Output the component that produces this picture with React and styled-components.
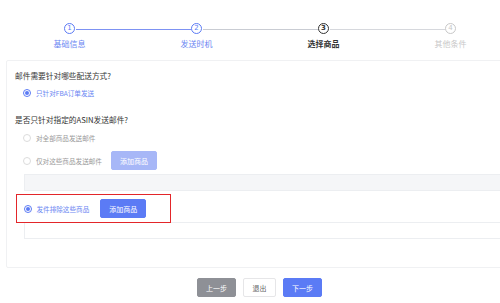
import React from "react";
import styled, { createGlobalStyle, css } from "styled-components";

const Global = createGlobalStyle`
  html, body { margin: 0; padding: 0; background: #fff; overflow: hidden; }
  body { font-family: "Noto Sans CJK SC", "Noto Sans", sans-serif; color: #333; }
  * { box-sizing: border-box; }
`;

const BLUE = "#5b7bf5";

const Page = styled.div`
  width: 500px;
  height: 303px;
  padding-top: 23px;
`;

const Steps = styled.div`
  display: grid;
  grid-template-columns: repeat(4, 127px);
  padding-left: 6px;
`;

const lineColor = { done: "#7d92f3", current: "#c9ccd3", todo: "#d6d8dd" };

const Step = styled.div`
  position: relative;
  display: flex;
  flex-direction: column;
  align-items: center;
  &::before, &::after {
    content: "";
    position: absolute;
    top: 5.5px;
    height: 1px;
    width: calc(50% - 6px);
  }
  &::before {
    left: 0;
    background: ${(p) => p.$left || "transparent"};
  }
  &::after {
    right: 0;
    background: ${(p) => p.$right || "transparent"};
  }
`;

const circleColors = {
  done: BLUE,
  current: "#333",
  todo: "#c8c8c8",
};

const Circle = styled.div`
  width: 11px;
  height: 11px;
  border-radius: 50%;
  border: 1.2px solid ${(p) => circleColors[p.$state]};
  color: ${(p) => circleColors[p.$state]};
  font-size: 7px;
  line-height: 9px;
  text-align: center;
  font-weight: ${(p) => (p.$state === "current" ? 700 : 400)};
  font-family: "DejaVu Sans", sans-serif;
  background: #fff;
`;

const StepLabel = styled.div`
  margin-top: 4px;
  font-size: 8px;
  line-height: 11px;
  color: ${(p) =>
    p.$state === "done" ? "#6a86f2" : p.$state === "current" ? "#333" : "#c8c8c8"};
  font-weight: ${(p) => (p.$state === "current" ? 700 : 400)};
`;

const Card = styled.div`
  margin-top: 11px;
  margin-left: 6px;
  width: 520px;
  height: 208px;
  border: 1px solid #f0f1f3;
  border-radius: 2px;
  padding: 9px 0 0 8px;
`;

const Question = styled.div`
  font-size: 7.7px;
  line-height: 12px;
  color: #333;
  margin-top: ${(p) => p.$mt || 0}px;
  margin-bottom: ${(p) => p.$mb || 0}px;
`;

const OptionRow = styled.div`
  display: flex;
  align-items: center;
  height: ${(p) => p.$h || 12}px;
  padding-left: 8px;
  margin-top: ${(p) => p.$mt || 0}px;
`;

const Radio = styled.span`
  width: 8px;
  height: 8px;
  border-radius: 50%;
  flex: none;
  border: 1px solid ${(p) => (p.$checked ? BLUE : "#dcdcdc")};
  background: #fff;
  display: flex;
  align-items: center;
  justify-content: center;
  ${(p) =>
    p.$checked &&
    css`
      &::after {
        content: "";
        width: 4px;
        height: 4px;
        border-radius: 50%;
        background: ${BLUE};
      }
    `}
`;

const OptionText = styled.span`
  margin-left: 5px;
  font-size: 6.6px;
  line-height: 12px;
  color: ${(p) => (p.$active ? "#6a86f2" : "#999")};
`;

const Button = styled.button`
  font-family: inherit;
  border-radius: 2px;
  font-size: 7px;
  height: ${(p) => p.$h || 19}px;
  width: ${(p) => p.$w}px;
  padding: 0;
  margin-left: ${(p) => p.$ml || 0}px;
  cursor: pointer;
  ${(p) =>
    p.$kind === "primary" &&
    css`
      background: ${BLUE};
      border: 1px solid ${BLUE};
      color: #fff;
    `}
  ${(p) =>
    p.$kind === "disabled" &&
    css`
      background: #a7b7f7;
      border: 1px solid #a7b7f7;
      color: #fff;
    `}
  ${(p) =>
    p.$kind === "grey" &&
    css`
      background: #8e9096;
      border: 1px solid #8e9096;
      color: #fff;
    `}
  ${(p) =>
    p.$kind === "plain" &&
    css`
      background: #fff;
      border: 1px solid #e6e6e8;
      color: #666;
    `}
`;

const TableBox = styled.div`
  margin-left: 9px;
  height: ${(p) => p.$h}px;
  margin-top: ${(p) => p.$mt || 0}px;
  background: ${(p) => (p.$grey ? "#f5f6f8" : "#fff")};
  border: 1px solid #eceef1;
  border-right: none;
`;

const Highlight = styled.div`
  margin-top: 3px;
  margin-left: 1px;
  width: 155px;
  height: 29px;
  border: 1.5px solid #e3262a;
  display: flex;
  align-items: center;
  padding-left: 6.5px;
  position: relative;
  z-index: 1;
  margin-bottom: -1px;
`;

const Footer = styled.div`
  display: flex;
  justify-content: center;
  gap: 7px;
  padding-left: 19px;
  margin-top: 10px;
`;

const steps = [
  { n: 1, label: "基础信息", state: "done", right: lineColor.done },
  { n: 2, label: "发送时机", state: "done", left: lineColor.done, right: lineColor.current },
  { n: 3, label: "选择商品", state: "current", left: lineColor.current, right: lineColor.todo },
  { n: 4, label: "其他条件", state: "todo", left: lineColor.todo },
];

export default function App() {
  return (
    <>
      <Global />
      <Page>
        <Steps>
          {steps.map((s) => (
            <Step key={s.n} $left={s.left} $right={s.right}>
              <Circle $state={s.state}>{s.n}</Circle>
              <StepLabel $state={s.state}>{s.label}</StepLabel>
            </Step>
          ))}
        </Steps>
        <Card>
          <Question $mb={5}>邮件需要针对哪些配送方式?</Question>
          <OptionRow>
            <Radio $checked />
            <OptionText $active>只针对FBA订单发送</OptionText>
          </OptionRow>
          <Question $mt={15} $mb={6}>
            是否只针对指定的ASIN发送邮件?
          </Question>
          <OptionRow>
            <Radio />
            <OptionText>对全部商品发送邮件</OptionText>
          </OptionRow>
          <OptionRow $h={19} $mt={7}>
            <Radio />
            <OptionText>仅对这些商品发送邮件</OptionText>
            <Button $kind="disabled" $w={46} $ml={9}>
              添加商品
            </Button>
          </OptionRow>
          <TableBox $grey $h={17} $mt={4} />
          <Highlight>
            <Radio $checked />
            <OptionText $active>发件排除这些商品</OptionText>
            <Button $kind="primary" $w={46} $ml={11}>
              添加商品
            </Button>
          </Highlight>
          <TableBox $h={17} />
        </Card>
        <Footer>
          <Button $kind="grey" $w={39}>上一步</Button>
          <Button $kind="plain" $w={33}>退出</Button>
          <Button $kind="primary" $w={39}>下一步</Button>
        </Footer>
      </Page>
    </>
  );
}
